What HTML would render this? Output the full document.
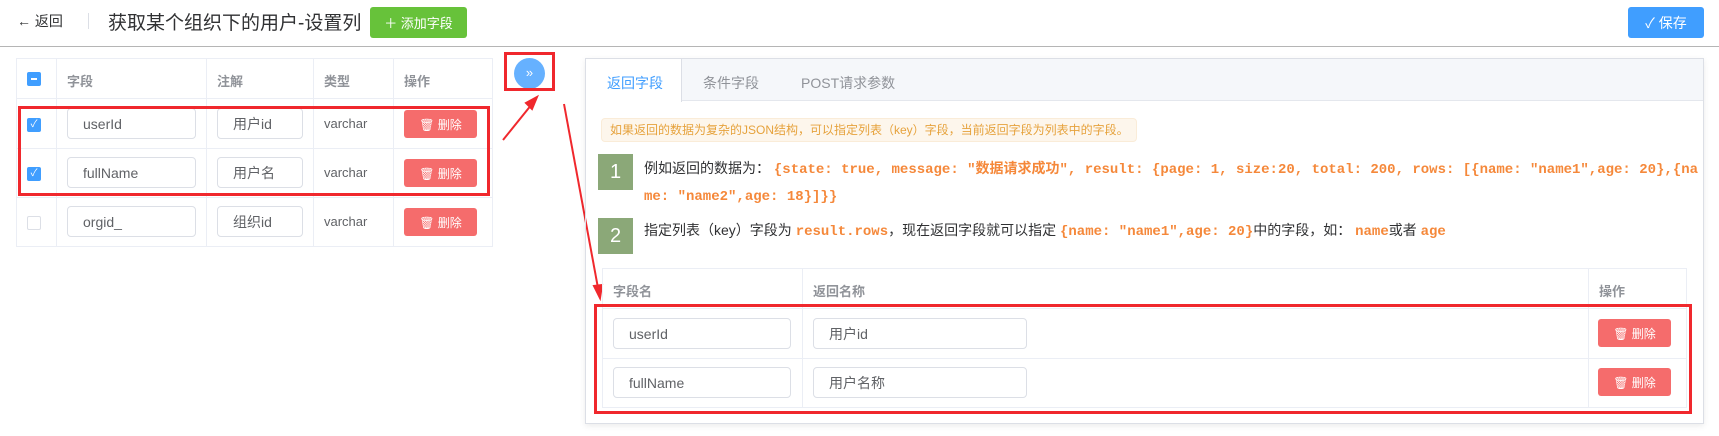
<!DOCTYPE html>
<html><head><meta charset="utf-8"><style>
*{box-sizing:border-box;margin:0;padding:0}
body{width:1719px;height:436px;background:#fff;position:relative;overflow:hidden;font-family:"Liberation Sans","Noto Sans CJK SC",sans-serif;color:#606266;font-size:13px}
.a{position:absolute}
.btn{position:absolute;color:#fff;border-radius:3px;font-size:13px;display:flex;align-items:center;justify-content:center}
.del{background:#f56c6c;width:73px;height:28px;font-size:12px}
.inp{position:absolute;border:1px solid #dcdfe6;border-radius:4px;background:#fff;font-size:14px;color:#606266;padding-left:15px;display:flex;align-items:center}
.hl{position:absolute;background:#ebeef5}
.cb{position:absolute;width:14px;height:14px;border-radius:2px;border:1px solid #dcdfe6;background:#fff}
.cb.on{background:#409eff;border-color:#409eff}
.code{font-family:"Liberation Mono","Noto Sans CJK SC",monospace;font-weight:bold;color:#f5883a}
.num{position:absolute;width:35px;height:36px;background:#8ba878;color:#fff;font-size:20px;display:flex;align-items:center;justify-content:center}
.red{position:absolute;border:3px solid #f0282d}
</style></head><body>
<!-- header -->
<div class="a" style="left:17px;top:11px;font-size:14px;color:#303133">&#8592; 返回</div>
<div class="a" style="left:88px;top:13px;width:1px;height:16px;background:#dcdfe6"></div>
<div class="a" style="left:108px;top:8px;font-size:19px;color:#303133">获取某个组织下的用户-设置列</div>
<div class="btn" style="left:370px;top:7px;width:97px;height:31px;background:#67c23a">＋ 添加字段</div>
<div class="btn" style="left:1628px;top:7px;width:76px;height:31px;background:#409eff;font-size:14px">✓ 保存</div>
<div class="a" style="left:0;top:46px;width:1719px;height:1px;background:#b5b5b5"></div>

<!-- left table -->
<div class="a" style="left:16px;top:58px;width:477px;height:189px;border:1px solid #ebeef5"></div>
<div class="hl" style="left:16px;top:98px;width:477px;height:1px"></div>
<div class="hl" style="left:16px;top:148px;width:477px;height:1px"></div>
<div class="hl" style="left:16px;top:197px;width:477px;height:1px"></div>
<div class="hl" style="left:56px;top:58px;width:1px;height:189px"></div>
<div class="hl" style="left:206px;top:58px;width:1px;height:189px"></div>
<div class="hl" style="left:313px;top:58px;width:1px;height:189px"></div>
<div class="hl" style="left:393px;top:58px;width:1px;height:189px"></div>
<div class="cb on" style="left:27px;top:72px"><div style="position:absolute;left:3px;top:5px;width:6px;height:2px;background:#fff"></div></div>
<div class="a" style="left:67px;top:71px;color:#909399;font-weight:bold">字段</div>
<div class="a" style="left:217px;top:71px;color:#909399;font-weight:bold">注解</div>
<div class="a" style="left:324px;top:71px;color:#909399;font-weight:bold">类型</div>
<div class="a" style="left:404px;top:71px;color:#909399;font-weight:bold">操作</div>

<div class="cb on" style="left:27px;top:118px;color:#fff;font-size:10px;line-height:12px;text-align:center">✓</div>
<div class="inp" style="left:67px;top:108px;width:129px;height:31px">userId</div>
<div class="inp" style="left:217px;top:108px;width:86px;height:31px">用户id</div>
<div class="a" style="left:324px;top:116px;font-size:13px">varchar</div>
<div class="btn del" style="left:404px;top:110px">🗑 删除</div>

<div class="cb on" style="left:27px;top:167px;color:#fff;font-size:10px;line-height:12px;text-align:center">✓</div>
<div class="inp" style="left:67px;top:157px;width:129px;height:31px">fullName</div>
<div class="inp" style="left:217px;top:157px;width:86px;height:31px">用户名</div>
<div class="a" style="left:324px;top:165px;font-size:13px">varchar</div>
<div class="btn del" style="left:404px;top:159px">🗑 删除</div>

<div class="cb" style="left:27px;top:216px"></div>
<div class="inp" style="left:67px;top:206px;width:129px;height:31px">orgid_</div>
<div class="inp" style="left:217px;top:206px;width:86px;height:31px">组织id</div>
<div class="a" style="left:324px;top:214px;font-size:13px">varchar</div>
<div class="btn del" style="left:404px;top:208px">🗑 删除</div>

<div class="red" style="left:18px;top:106px;width:472px;height:90px"></div>

<!-- chevron -->
<div class="a" style="left:514px;top:58px;width:31px;height:31px;border-radius:50%;background:#66b1ff;color:#fff;font-size:13px;text-align:center;line-height:29px">»</div>
<div class="red" style="left:504px;top:52px;width:51px;height:39px"></div>

<svg class="a" style="left:0;top:0" width="1719" height="436">
<g stroke="#f0282d" stroke-width="2" fill="#f0282d">
<line x1="503" y1="140" x2="532" y2="104"/>
<polygon points="537,97 526,103 532,109"/>
<line x1="564" y1="104" x2="598" y2="288"/>
<polygon points="600,298 594,286 602,285"/>
</g></svg>

<!-- right panel -->
<div class="a" style="left:585px;top:58px;width:1119px;height:366px;border:1px solid #dcdfe6;box-shadow:0 2px 6px rgba(0,0,0,.08)"></div>
<div class="a" style="left:586px;top:59px;width:1117px;height:42px;background:#f5f7fa;border-bottom:1px solid #e4e7ed"></div>
<div class="a" style="left:586px;top:59px;width:96px;height:43px;background:#fff;border-right:1px solid #dcdfe6"></div>
<div class="a" style="left:607px;top:73px;font-size:14px;color:#409eff">返回字段</div>
<div class="a" style="left:703px;top:73px;font-size:14px;color:#909399">条件字段</div>
<div class="a" style="left:801px;top:73px;font-size:14px;color:#909399">POST请求参数</div>

<div class="a" style="left:601px;top:118px;width:536px;height:24px;background:#fdf6ec;border:1px solid #faecd8;border-radius:4px;color:#e6a23c;font-size:12px;line-height:22px;padding-left:8px;white-space:nowrap">如果返回的数据为复杂的JSON结构，可以指定列表（key）字段，当前返回字段为列表中的字段。</div>

<div class="num" style="left:598px;top:154px">1</div>
<div class="a" style="left:644px;top:156px;font-size:14px;color:#303133;white-space:nowrap;line-height:25px">例如返回的数据为： <span class="code" style="font-size:14px">{state: true, message: "数据请求成功", result: {page: 1, size:20, total: 200, rows: [{name: "name1",age: 20},{na</span><br><span class="code">me: "name2",age: 18}]}}</span></div>

<div class="num" style="left:598px;top:218px">2</div>
<div class="a" style="left:644px;top:220px;font-size:14px;color:#303133;white-space:nowrap">指定列表（key）字段为 <span class="code">result.rows</span>，现在返回字段就可以指定 <span class="code">{name: "name1",age: 20}</span>中的字段，如： <span class="code">name</span>或者 <span class="code">age</span></div>

<div class="a" style="left:602px;top:268px;width:1085px;height:140px;border:1px solid #ebeef5"></div>
<div class="hl" style="left:602px;top:308px;width:1085px;height:1px"></div>
<div class="hl" style="left:602px;top:358px;width:1085px;height:1px"></div>
<div class="hl" style="left:802px;top:268px;width:1px;height:140px"></div>
<div class="hl" style="left:1588px;top:268px;width:1px;height:140px"></div>
<div class="a" style="left:613px;top:281px;color:#909399;font-weight:bold">字段名</div>
<div class="a" style="left:813px;top:281px;color:#909399;font-weight:bold">返回名称</div>
<div class="a" style="left:1599px;top:281px;color:#909399;font-weight:bold">操作</div>

<div class="inp" style="left:613px;top:318px;width:178px;height:31px">userId</div>
<div class="inp" style="left:813px;top:318px;width:214px;height:31px">用户id</div>
<div class="btn del" style="left:1598px;top:319px">🗑 删除</div>
<div class="inp" style="left:613px;top:367px;width:178px;height:31px">fullName</div>
<div class="inp" style="left:813px;top:367px;width:214px;height:31px">用户名称</div>
<div class="btn del" style="left:1598px;top:368px">🗑 删除</div>

<div class="red" style="left:594px;top:304px;width:98px;height:110px;width:1098px"></div>
</body></html>
